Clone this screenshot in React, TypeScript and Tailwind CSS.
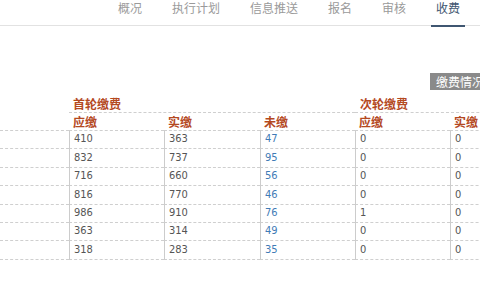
import React from 'react'

const tabs = ['概况', '执行计划', '信息推送', '报名', '审核', '收费']

const rows: [number, number, number, number, number][] = [
  [410, 363, 47, 0, 0],
  [832, 737, 95, 0, 0],
  [716, 660, 56, 0, 0],
  [816, 770, 46, 0, 0],
  [986, 910, 76, 1, 0],
  [363, 314, 49, 0, 0],
  [318, 283, 35, 0, 0],
]

const colW = ['w-[95px]', 'w-[96px]', 'w-[95px]', 'w-[95px]', 'w-[95px]']
const cn = { fontFamily: '"Noto Sans CJK SC", "Noto Sans", sans-serif' }
const num = { fontFamily: '"DejaVu Sans Condensed", "DejaVu Sans", Tahoma, sans-serif' }

export default function App() {
  return (
    <div className="w-[480px] h-[300px] bg-white overflow-hidden" style={cn}>
      {/* Tabs */}
      <div className="h-[26px] border-b border-[#e2e2e2] flex pl-[113px] gap-[20px]">
        {tabs.map((t) => (
          <div
            key={t}
            className={`relative px-[5px] h-[25px] text-[12px] leading-[16px] whitespace-nowrap ${
              t === '收费' ? 'text-[#3f5671]' : 'text-[#9a9a9a]'
            }`}
          >
            {t}
            {t === '收费' && (
              <div className="absolute left-0 right-0 bottom-[-2px] h-[2px] bg-[#3f5671]" />
            )}
          </div>
        ))}
      </div>

      {/* Action */}
      <div className="mt-[47px] pl-[430px] flex">
        <div className="h-[17px] bg-[#8a8a8a] text-white text-[12px] leading-[17px] px-[6px] whitespace-nowrap shrink-0">
          缴费情况
        </div>
      </div>

      {/* Table */}
      <div className="mt-[5px] w-[545px] text-[12px]">
        <div className="flex h-[18px]">
          <div className="w-[69px] shrink-0" />
          <div className="w-[286px] shrink-0 border-b border-dashed border-[#cfcfcf] pl-[4px] font-bold text-[#b4491f] leading-[17px]">
            首轮缴费
          </div>
          <div className="w-[190px] shrink-0 border-b border-dashed border-[#cfcfcf] pl-[5px] font-bold text-[#b4491f] leading-[17px]">
            次轮缴费
          </div>
        </div>
        <div className="flex h-[18px]">
          <div className="w-[69px] shrink-0 border-b border-dashed border-[#cfcfcf]" />
          {['应缴', '实缴', '未缴', '应缴', '实缴'].map((h, i) => (
            <div
              key={i}
              className={`${colW[i]} shrink-0 border-b border-dashed border-[#cfcfcf] pl-[4px] font-bold text-[#b4491f] leading-[17px]`}
            >
              {h}
            </div>
          ))}
        </div>
        {rows.map((r, ri) => (
          <div key={ri} className="flex h-[18.4px]">
            <div className="w-[69px] shrink-0 border-b border-dashed border-[#cfcfcf]" />
            {r.map((v, i) => (
              <div
                key={i}
                className={`${colW[i]} shrink-0 border-b border-dashed border-[#cfcfcf] border-l border-l-[#cccccc] border-l-solid pl-[4px] text-[11px] flex items-center ${
                  i === 2 ? 'text-[#3f7bb6]' : 'text-[#555555]'
                }`}
                style={{ ...num, borderLeftStyle: 'solid' }}
              >
                {v}
              </div>
            ))}
          </div>
        ))}
      </div>
    </div>
  )
}
